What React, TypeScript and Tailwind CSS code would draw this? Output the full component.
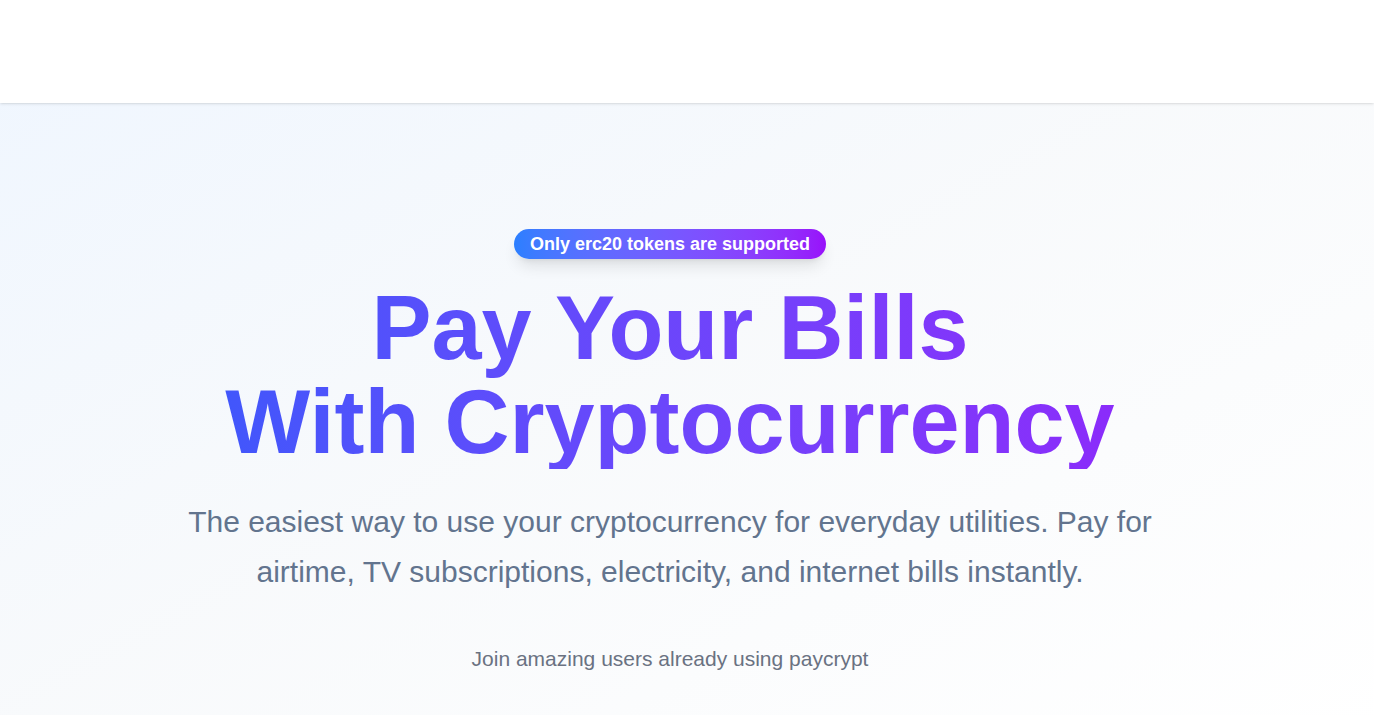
export default function App() {
  return (
    <div className="min-h-screen bg-gradient-to-br from-blue-50 via-slate-50 to-white font-['Liberation_Sans',Arial,sans-serif]">
      {/* Top bar */}
      <header className="h-[103px] bg-white shadow-sm"></header>

      {/* Hero */}
      <main className="pr-[34px] pt-[126px] pb-16">
        <div className="flex flex-col items-center text-center">
          <span className="rounded-full bg-gradient-to-r from-blue-500 to-purple-600 px-4 py-px text-lg font-bold text-white shadow-lg">
            Only erc20 tokens are supported
          </span>

          <h1 className="mt-[22px] w-full bg-gradient-to-r from-blue-600 to-purple-600 bg-clip-text text-[90px] font-bold leading-[94px] text-transparent">
            Pay Your Bills
            <br />
            With Cryptocurrency
          </h1>

          <p className="mt-7 max-w-5xl text-[30px] leading-[50px] text-slate-500">
            The easiest way to use your cryptocurrency for everyday utilities. Pay for airtime, TV
            subscriptions, electricity, and internet bills instantly.
          </p>

          <p className="mt-12 text-[21px] leading-7 text-gray-500">Join amazing users already using paycrypt</p>
        </div>
      </main>
    </div>
  );
}
